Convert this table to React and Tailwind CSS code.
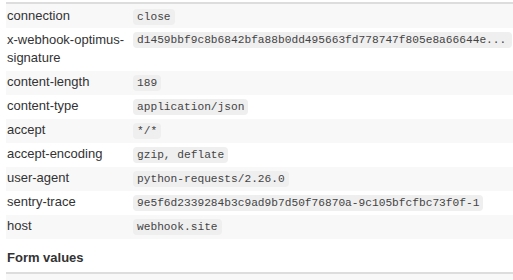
const headers = [
    ['connection', 'close'],
    ['x-webhook-optimus-signature', 'd1459bbf9c8b6842bfa88b0dd495663fd778747f805e8a66644e...', true],
    ['content-length', '189'],
    ['content-type', 'application/json'],
    ['accept', '*/*'],
    ['accept-encoding', 'gzip, deflate'],
    ['user-agent', 'python-requests/2.26.0'],
    ['sentry-trace', '9e5f6d2339284b3c9ad9b7d50f76870a-9c105bfcfbc73f0f-1'],
    ['host', 'webhook.site'],
];

function Code({ children, wide }) {
    return (
        <code
            className={`${wide ? 'block mt-[1.25px]' : 'inline'} rounded-[4px] bg-[#efefef] px-[4px] py-[2px] text-[11.2px] leading-[12px] text-[#444] whitespace-nowrap`}
            style={{ fontFamily: '"Liberation Mono", monospace' }}
        >
            {children}
        </code>
    );
}

export default function App() {
    return (
        <div
            className="w-[513px] h-[280px] overflow-hidden bg-white pl-[6px] text-[13px] leading-[18.5px] text-[#333]"
            style={{ fontFamily: '"Liberation Sans", Arial, sans-serif' }}
        >
            <div className="mt-[2px] border-t-2 border-[#ddd]">
                <table className="w-full table-fixed border-collapse">
                    <colgroup>
                        <col className="w-[126px]" />
                        <col />
                    </colgroup>
                    <tbody>
                        {headers.map(([name, value, wide], i) => (
                            <tr key={name} className={i % 2 === 0 ? 'bg-[#f8f8f8]' : ''}>
                                <td className="px-[1px] py-[2.75px] align-top">{name}</td>
                                <td className="overflow-hidden px-[1px] py-[2.75px] align-top">
                                    <Code wide={wide}>{value}</Code>
                                </td>
                            </tr>
                        ))}
                    </tbody>
                </table>
            </div>

            <div className="mt-[10.5px] border-b-2 border-[#ddd] px-[1px] pb-[4.5px] font-bold">Form values</div>
            <div className="h-[24px] bg-[#f8f8f8]" />
        </div>
    );
}
